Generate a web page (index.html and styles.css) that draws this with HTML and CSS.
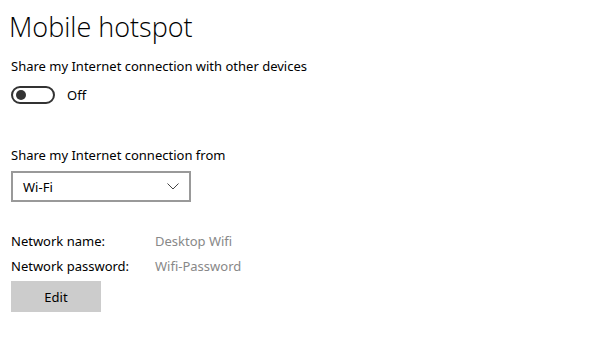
FILE: index.html
```html
<!DOCTYPE html>
<html>
<head>
<meta charset="utf-8">
<link rel="stylesheet" href="styles.css">
</head>
<body>
<main class="page">
  <h1 class="title">Mobile hotspot</h1>
  <p class="label share-label">Share my Internet connection with other devices</p>
  <div class="toggle-row">
    <span class="toggle"><span class="knob"></span></span>
    <span class="toggle-text">Off</span>
  </div>
  <p class="label from-label">Share my Internet connection from</p>
  <div class="select">
    <span class="select-text">Wi-Fi</span>
    <svg class="chevron" width="12" height="7" viewBox="0 0 12 7"><path d="M0.5 0.5 L6 6 L11.5 0.5" fill="none" stroke="#444" stroke-width="1"/></svg>
  </div>
  <div class="info">
    <span class="info-key">Network name:</span><span class="info-val">Desktop Wifi</span>
    <span class="info-key">Network password:</span><span class="info-val">Wifi-Password</span>
  </div>
  <button class="edit">Edit</button>
</main>
</body>
</html>
```
FILE: styles.css
```css
html, body {
  margin: 0;
  padding: 0;
  background: #fff;
}
body {
  font-family: "Noto Sans", "Open Sans", sans-serif;
  color: #000;
  font-size: 13px;
}
.page {
  padding: 0 0 0 11px;
  display: flex;
  flex-direction: column;
  align-items: flex-start;
}
.title {
  margin: 10px 0 0 -2px;
  font-family: "Open Sans", sans-serif;
  font-weight: 300;
  font-size: 27px;
  line-height: 34px;
  color: #000;
}
.label {
  margin: 0;
  line-height: 20px;
}
.share-label {
  margin-top: 12px;
}
.toggle-row {
  display: flex;
  align-items: center;
  margin-top: 9px;
}
.toggle {
  box-sizing: border-box;
  width: 44px;
  height: 18px;
  border: 2px solid #333;
  border-radius: 9px;
  display: flex;
  align-items: center;
  padding-left: 3px;
}
.knob {
  width: 10px;
  height: 10px;
  border-radius: 50%;
  background: #333;
}
.toggle-text {
  margin-left: 12px;
  line-height: 20px;
}
.from-label {
  margin-top: 40px;
}
.select {
  box-sizing: border-box;
  margin-top: 6px;
  width: 180px;
  height: 31px;
  border: 2px solid #999;
  display: flex;
  align-items: center;
  justify-content: space-between;
  padding: 0 10px 0 10px;
}
.chevron {
  display: block;
}
.info {
  margin-top: 29px;
  display: grid;
  grid-template-columns: 144px auto;
  row-gap: 5px;
  line-height: 20px;
}
.info-val {
  color: #888;
}
.edit {
  margin-top: 5px;
  width: 90px;
  height: 31px;
  border: none;
  background: #ccc;
  font-family: inherit;
  font-size: 13px;
  color: #000;
  padding: 0;
}
```
